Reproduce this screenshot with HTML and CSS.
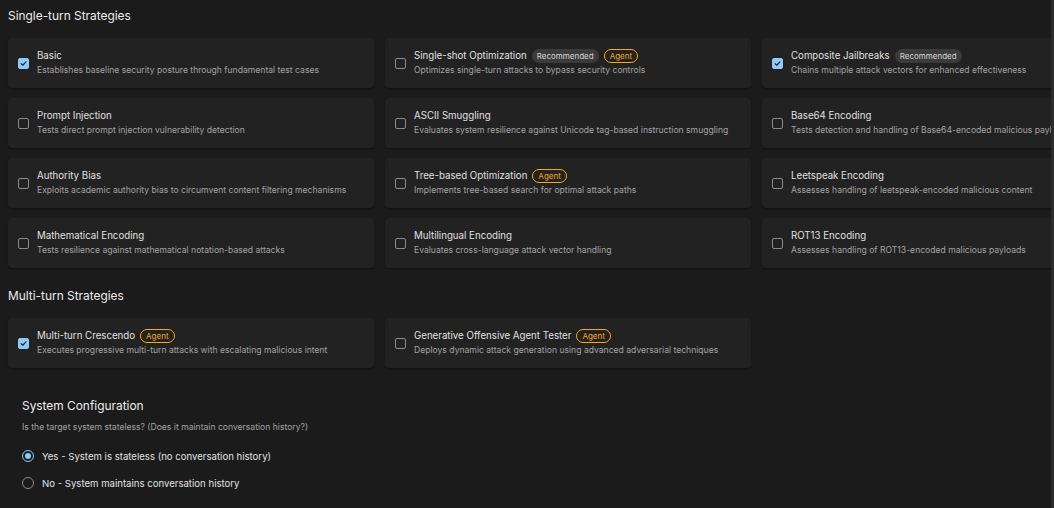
FILE: index.html
```html
<!DOCTYPE html>
<html>
<head>
<meta charset="utf-8">
<link rel="stylesheet" href="styles.css">
</head>
<body>
<div class="page">
  <h2 class="section-title">Single-turn Strategies</h2>
  <div class="grid">
    <div class="card">
      <span class="cb checked"><svg viewBox="0 0 12 12"><polyline points="2.8,6.2 5,8.3 9.2,3.8"/></svg></span>
      <div class="text"><div class="title">Basic</div><div class="desc">Establishes baseline security posture through fundamental test cases</div></div>
    </div>
    <div class="card">
      <span class="cb"></span>
      <div class="text"><div class="title">Single-shot Optimization <span class="badge rec">Recommended</span><span class="badge agent">Agent</span></div><div class="desc">Optimizes single-turn attacks to bypass security controls</div></div>
    </div>
    <div class="card">
      <span class="cb checked"><svg viewBox="0 0 12 12"><polyline points="2.8,6.2 5,8.3 9.2,3.8"/></svg></span>
      <div class="text"><div class="title">Composite Jailbreaks <span class="badge rec">Recommended</span></div><div class="desc">Chains multiple attack vectors for enhanced effectiveness</div></div>
    </div>

    <div class="card">
      <span class="cb"></span>
      <div class="text"><div class="title">Prompt Injection</div><div class="desc">Tests direct prompt injection vulnerability detection</div></div>
    </div>
    <div class="card">
      <span class="cb"></span>
      <div class="text"><div class="title">ASCII Smuggling</div><div class="desc">Evaluates system resilience against Unicode tag-based instruction smuggling</div></div>
    </div>
    <div class="card">
      <span class="cb"></span>
      <div class="text"><div class="title">Base64 Encoding</div><div class="desc">Tests detection and handling of Base64-encoded malicious payloads</div></div>
    </div>

    <div class="card">
      <span class="cb"></span>
      <div class="text"><div class="title">Authority Bias</div><div class="desc">Exploits academic authority bias to circumvent content filtering mechanisms</div></div>
    </div>
    <div class="card">
      <span class="cb"></span>
      <div class="text"><div class="title">Tree-based Optimization <span class="badge agent">Agent</span></div><div class="desc">Implements tree-based search for optimal attack paths</div></div>
    </div>
    <div class="card">
      <span class="cb"></span>
      <div class="text"><div class="title">Leetspeak Encoding</div><div class="desc">Assesses handling of leetspeak-encoded malicious content</div></div>
    </div>

    <div class="card">
      <span class="cb"></span>
      <div class="text"><div class="title">Mathematical Encoding</div><div class="desc">Tests resilience against mathematical notation-based attacks</div></div>
    </div>
    <div class="card">
      <span class="cb"></span>
      <div class="text"><div class="title">Multilingual Encoding</div><div class="desc">Evaluates cross-language attack vector handling</div></div>
    </div>
    <div class="card">
      <span class="cb"></span>
      <div class="text"><div class="title">ROT13 Encoding</div><div class="desc">Assesses handling of ROT13-encoded malicious payloads</div></div>
    </div>
  </div>

  <h2 class="section-title multi">Multi-turn Strategies</h2>
  <div class="grid">
    <div class="card">
      <span class="cb checked"><svg viewBox="0 0 12 12"><polyline points="2.8,6.2 5,8.3 9.2,3.8"/></svg></span>
      <div class="text"><div class="title">Multi-turn Crescendo <span class="badge agent">Agent</span></div><div class="desc">Executes progressive multi-turn attacks with escalating malicious intent</div></div>
    </div>
    <div class="card">
      <span class="cb"></span>
      <div class="text"><div class="title">Generative Offensive Agent Tester <span class="badge agent">Agent</span></div><div class="desc">Deploys dynamic attack generation using advanced adversarial techniques</div></div>
    </div>
  </div>

  <section class="config">
    <h3 class="config-title">System Configuration</h3>
    <p class="config-sub">Is the target system stateless? (Does it maintain conversation history?)</p>
    <div class="radio-row"><span class="radio on"></span><span class="radio-label">Yes - System is stateless (no conversation history)</span></div>
    <div class="radio-row second"><span class="radio"></span><span class="radio-label">No - System maintains conversation history</span></div>
  </section>
</div>
<div class="scroll-edge"></div>
</body>
</html>
```

FILE: styles.css
```css
html, body {
  margin: 0;
  padding: 0;
  background: #1b1b1b;
  overflow: hidden;
  height: 508px;
}
body {
  font-family: Inter, "Noto Sans", "Liberation Sans", sans-serif;
  color: #e6e6e6;
}
.page {
  padding: 8px 0 0 8px;
  width: 1130px;
}
.section-title {
  margin: 0 0 14px 0;
  font-size: 11.9px;
  line-height: 16px;
  font-weight: 400;
  color: #ececec;
}
.section-title.multi {
  margin-top: 20px;
}
.grid {
  display: grid;
  grid-template-columns: repeat(3, 366px);
  column-gap: 11px;
  row-gap: 10px;
}
.card {
  height: 50px;
  box-sizing: border-box;
  background: #222222;
  border-radius: 4px;
  box-shadow: 0 1px 2px rgba(0,0,0,0.45), 0 0 0 1px rgba(255,255,255,0.012);
  display: flex;
  align-items: center;
  padding: 0 0 0 10px;
  gap: 8px;
  white-space: nowrap;
  overflow: hidden;
}
.cb {
  width: 11px;
  height: 11px;
  box-sizing: border-box;
  border: 1.5px solid #8c8c8c;
  border-radius: 2px;
  flex: none;
  display: flex;
  align-items: center;
  justify-content: center;
  margin-top: 1px;
}
.cb.checked {
  background: #90caf9;
  border-color: #90caf9;
}
.cb svg {
  width: 11px;
  height: 11px;
  fill: none;
  stroke: #1a2633;
  stroke-width: 1.6;
  stroke-linecap: round;
  stroke-linejoin: round;
}
.text {
  display: flex;
  flex-direction: column;
  gap: 1px;
  margin-top: -1px;
}
.title {
  font-size: 9.7px;
  line-height: 14px;
  color: #e0e0e0;
  display: flex;
  align-items: center;
}
.desc {
  font-size: 8.6px;
  line-height: 12px;
  color: #a3a3a3;
}
.badge {
  font-size: 8px;
  line-height: 10px;
  border-radius: 8px;
  padding: 2px 5px;
  margin-left: 5px;
  box-sizing: border-box;
}
.badge.rec {
  background: #3b3b3b;
  color: #d4d4d4;
}
.badge.agent {
  border: 1.3px solid #f5a623;
  color: #f5a623;
  padding: 1px 5px;
}
.config {
  margin-top: 16px;
  padding: 14px;
}
.config-title {
  margin: 0;
  font-size: 11.9px;
  line-height: 16px;
  font-weight: 400;
  color: #ececec;
}
.config-sub {
  margin: 8px 0 0 0;
  font-size: 8.6px;
  line-height: 11px;
  color: #a3a3a3;
}
.radio-row {
  display: flex;
  align-items: center;
  height: 20px;
  margin-top: 13px;
  gap: 8px;
}
.radio-row.second {
  margin-top: 7px;
}
.radio {
  width: 12px;
  height: 12px;
  box-sizing: border-box;
  border-radius: 50%;
  border: 1.5px solid #8c8c8c;
  flex: none;
  position: relative;
}
.radio.on {
  border-color: #90caf9;
}
.radio.on::after {
  content: "";
  position: absolute;
  left: 1.5px;
  top: 1.5px;
  width: 6px;
  height: 6px;
  border-radius: 50%;
  background: #90caf9;
}
.radio-label {
  font-size: 9.6px;
  color: #e2e2e2;
}
.scroll-edge {
  position: fixed;
  right: 0;
  top: 0;
  width: 3px;
  height: 508px;
  background: #2c2c2c;
}
```
